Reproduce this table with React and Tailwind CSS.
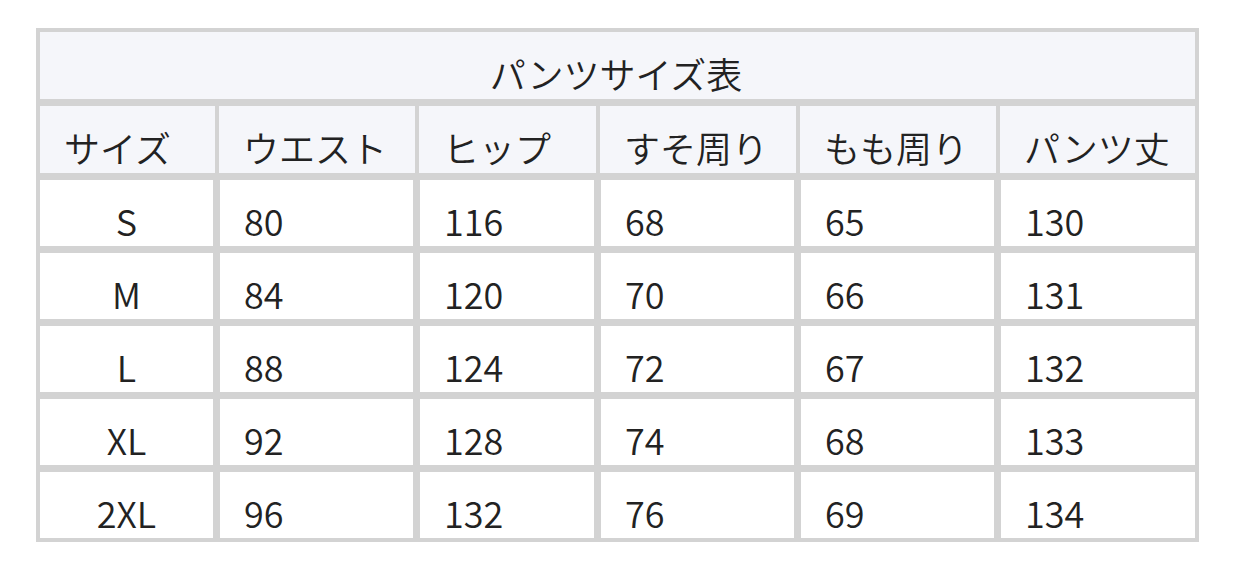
import React from "react";

const headers = ["サイズ", "ウエスト", "ヒップ", "すそ周り", "もも周り", "パンツ丈"];
const rows = [
  ["S", "80", "116", "68", "65", "130"],
  ["M", "84", "120", "70", "66", "131"],
  ["L", "88", "124", "72", "67", "132"],
  ["XL", "92", "128", "74", "68", "133"],
  ["2XL", "96", "132", "76", "69", "134"],
];

export default function App() {
  return (
    <div
      className="w-[1234px] h-[569px] bg-white pt-[28px] pl-[36px]"
      style={{ fontFamily: '"Noto Sans CJK JP", "Noto Sans", sans-serif' }}
    >
      <div className="w-[1163px] bg-[#d3d3d3] p-[4px] flex flex-col gap-[7px] text-[#222] text-[36px] leading-none font-[350]">
        <div className="h-[67px] bg-[#f5f6fa] flex items-end justify-center pb-[8px] pr-[3px]">
          パンツサイズ表
        </div>
        <div className="grid grid-cols-[175px_196px_177px_196px_196px_195px] gap-[4px]">
          {headers.map((h) => (
            <div key={h} className="h-[67px] bg-[#f5f6fa] flex items-end pl-[24px] pb-[8px]">
              {h}
            </div>
          ))}
        </div>
        {rows.map((r) => (
          <div key={r[0]} className="grid grid-cols-[173px_193px_174px_193px_193px_194px] gap-[7px]">
            {r.map((c, i) => (
              <div
                key={i}
                className={
                  i === 0
                    ? "h-[66px] bg-white flex items-end justify-center pb-[8px]"
                    : "h-[66px] bg-white flex items-end pl-[24px] pb-[8px]"
                }
              >
                {c}
              </div>
            ))}
          </div>
        ))}
      </div>
    </div>
  );
}
